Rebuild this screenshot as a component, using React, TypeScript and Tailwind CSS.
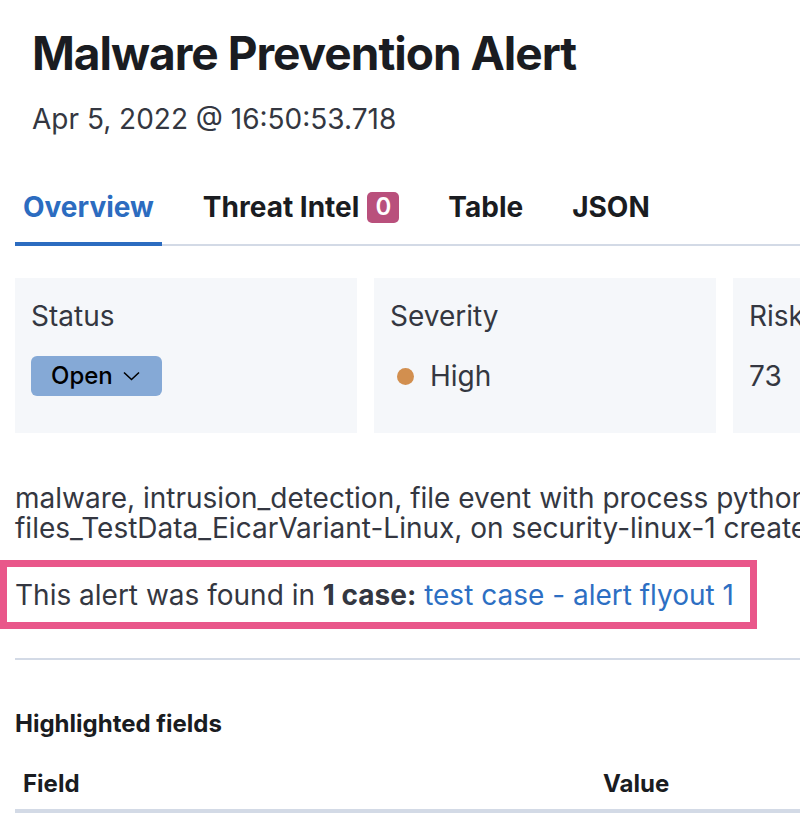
const tabs = [
  { label: 'Overview', active: true },
  { label: 'Threat Intel', badge: '0' },
  { label: 'Table' },
  { label: 'JSON' },
];

export default function App() {
  return (
    <div className="w-[800px] h-[828px] overflow-hidden bg-white font-['Inter',sans-serif] text-[#343741]">
      <div className="w-[1090px] px-[15px]">
        {/* Header */}
        <div className="pl-[17px] pt-[25px]">
          <h1 className="text-[46px] leading-[56px] font-bold tracking-[-1px] text-[#1a1c21]">Malware Prevention Alert</h1>
          <p className="mt-[18px] text-[28px] leading-[40px]">Apr 5, 2022 @ 16:50:53.718</p>
        </div>

        {/* Tabs */}
        <div className="mt-[33px] flex gap-[33px] shadow-[inset_0_-2px_0_#d3dae6]">
          {tabs.map((t) => (
            <div
              key={t.label}
              className={`flex items-center gap-[8px] px-[8px] pt-[15px] pb-[15px] border-b-4 ${
                t.active ? 'border-[#2c6cc0] text-[#2c6cc0]' : 'border-transparent text-[#1a1c21]'
              }`}
            >
              <span className="text-[28px] leading-[40px] font-bold">{t.label}</span>
              {t.badge && (
                <span className="flex h-[31px] w-[32px] items-center justify-center rounded-[5px] bg-[#b9507c] text-[24px] font-semibold text-white">
                  {t.badge}
                </span>
              )}
            </div>
          ))}
        </div>

        {/* Summary cards */}
        <div className="mt-[32px] grid grid-cols-3 gap-[17px]">
          <div className="h-[155px] bg-[#f5f7fa] px-[16px] pt-[18px]">
            <p className="text-[28px] leading-[40px]">Status</p>
            <div className="mt-[20px] inline-flex h-[40px] items-center gap-[10px] rounded-[6px] bg-[#85a9d6] pl-[20px] pr-[22px] text-black">
              <span className="text-[24px] font-medium">Open</span>
              <svg width="17" height="10" viewBox="0 0 17 10" fill="none" stroke="currentColor" strokeWidth="1.6">
                <polyline points="1,1.5 8.5,8.5 16,1.5" />
              </svg>
            </div>
          </div>
          <div className="h-[155px] bg-[#f5f7fa] px-[16px] pt-[18px]">
            <p className="text-[28px] leading-[40px]">Severity</p>
            <div className="mt-[20px] flex h-[40px] items-center gap-[16px] pl-[7px]">
              <span className="h-[17px] w-[17px] rounded-full bg-[#d28f4f]" />
              <span className="text-[28px]">High</span>
            </div>
          </div>
          <div className="h-[155px] bg-[#f5f7fa] px-[16px] pt-[18px]">
            <p className="text-[28px] leading-[40px]">Risk score</p>
            <div className="mt-[20px] flex h-[40px] items-center">
              <span className="text-[28px]">73</span>
            </div>
          </div>
        </div>

        {/* Reason */}
        <p className="mt-[50px] whitespace-nowrap text-[28px] leading-[30px]">
          malware, intrusion_detection, file event with process python, file
          <br />
          files_TestData_EicarVariant-Linux, on security-linux-1 created high alert Malware Prevention Alert.
        </p>

        {/* Related cases (highlighted) */}
        <div className="mt-[17px] -ml-[15px] inline-block border-[7px] border-[#e9578a] pl-[8px] pr-[16px] pt-[8px] pb-[7px]">
          <p className="text-[28px] leading-[40px]">
            This alert was found in <span className="font-bold">1 case:</span>{' '}
            <a className="text-[#2d6fc3]">test case - alert flyout 1</a>
          </p>
        </div>

        <div className="mt-[29px] h-[2px] bg-[#d3dae6]" />

        {/* Highlighted fields */}
        <h3 className="mt-[48px] text-[24px] leading-[32px] font-bold text-[#1a1c21]">Highlighted fields</h3>
        <div className="mt-[28px] flex border-b-4 border-[#d3dae6] pb-[9px] text-[24px] leading-[32px] font-bold text-[#1a1c21]">
          <div className="w-[580px] px-[8px]">Field</div>
          <div className="px-[8px]">Value</div>
        </div>
      </div>
    </div>
  );
}
